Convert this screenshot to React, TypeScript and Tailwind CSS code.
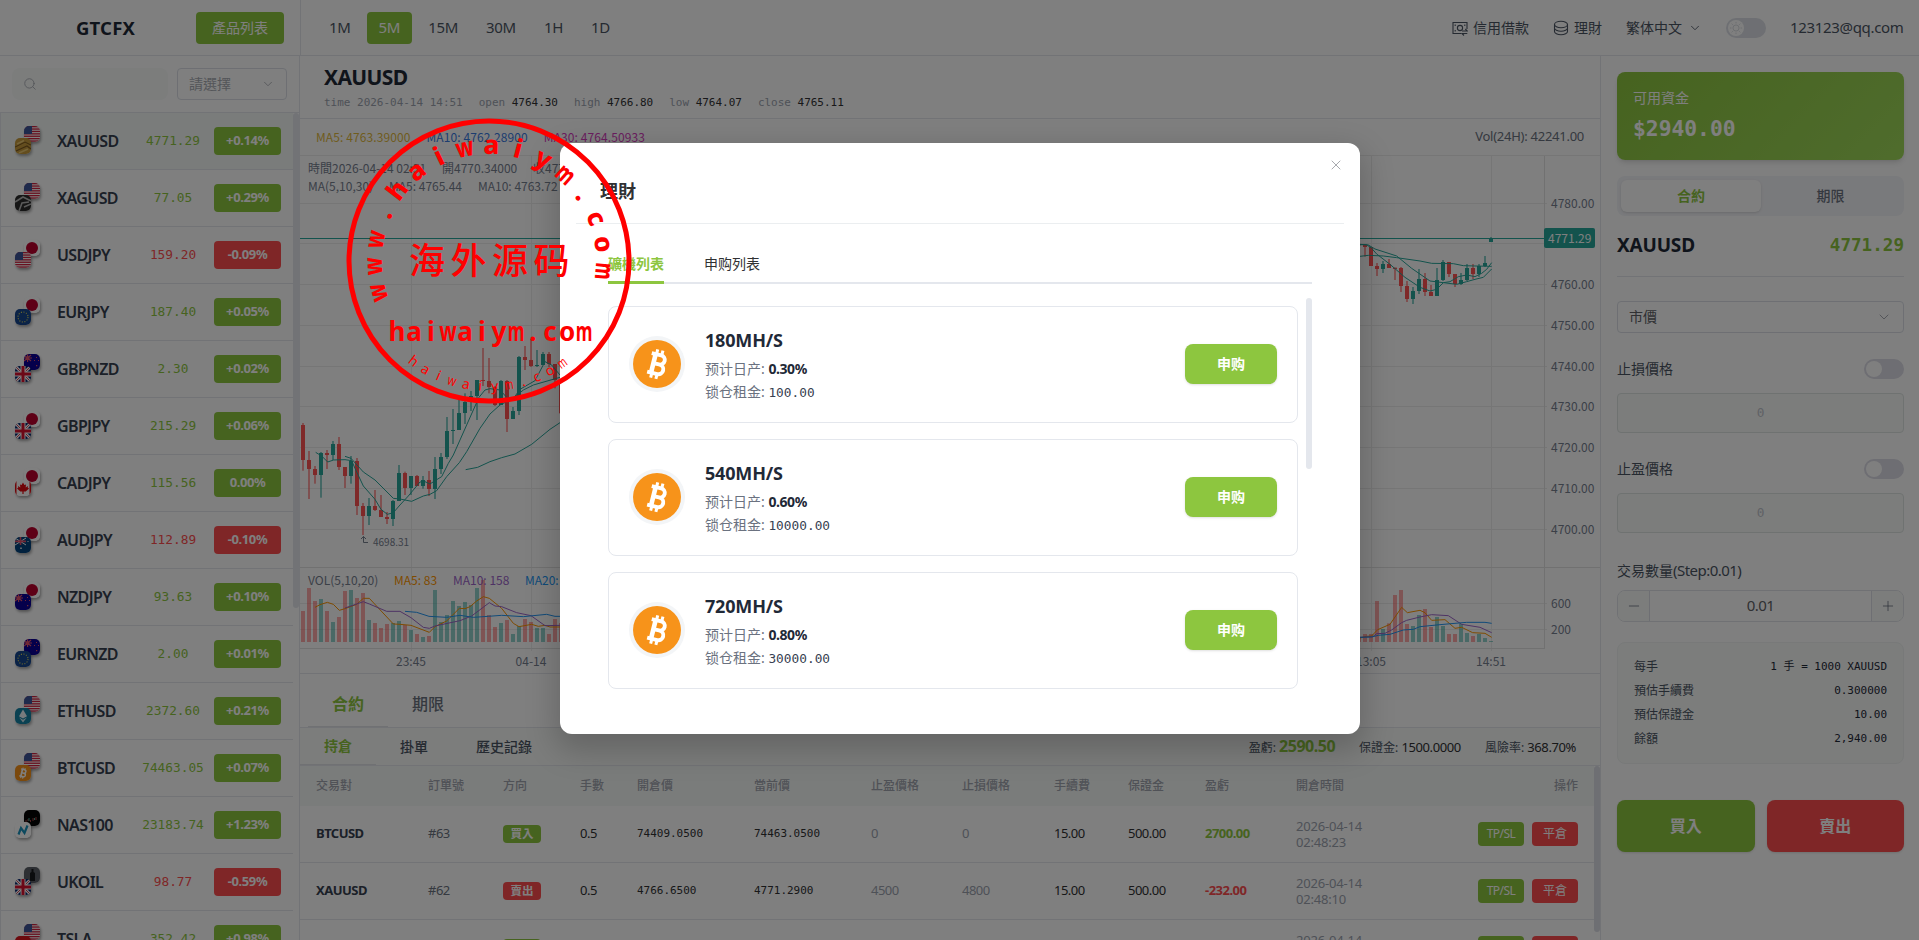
import { cx } from "class-variance-authority"
import { ChevronDown, Minus, Plus, Search, X } from "lucide-react"
import type { ReactNode } from "react"

type Asset =
  | "us"
  | "jp"
  | "eu"
  | "nz"
  | "au"
  | "gb"
  | "ca"
  | "gold"
  | "silver"
  | "eth"
  | "btc"
  | "nas"
  | "dark"
  | "oil"
  | "tsla"

type Product = { symbol: string; price: string; change: string; down?: boolean; back: Asset; front: Asset }

const products: Product[] = [
  { symbol: "XAUUSD", price: "4771.29", change: "+0.14%", back: "us", front: "gold" },
  { symbol: "XAGUSD", price: "77.05", change: "+0.29%", back: "us", front: "silver" },
  { symbol: "USDJPY", price: "159.20", change: "-0.09%", down: true, back: "jp", front: "us" },
  { symbol: "EURJPY", price: "187.40", change: "+0.05%", back: "jp", front: "eu" },
  { symbol: "GBPNZD", price: "2.30", change: "+0.02%", back: "nz", front: "gb" },
  { symbol: "GBPJPY", price: "215.29", change: "+0.06%", back: "jp", front: "gb" },
  { symbol: "CADJPY", price: "115.56", change: "0.00%", back: "jp", front: "ca" },
  { symbol: "AUDJPY", price: "112.89", change: "-0.10%", down: true, back: "jp", front: "au" },
  { symbol: "NZDJPY", price: "93.63", change: "+0.10%", back: "jp", front: "nz" },
  { symbol: "EURNZD", price: "2.00", change: "+0.01%", back: "nz", front: "eu" },
  { symbol: "ETHUSD", price: "2372.60", change: "+0.21%", back: "us", front: "eth" },
  { symbol: "BTCUSD", price: "74463.05", change: "+0.07%", back: "us", front: "btc" },
  { symbol: "NAS100", price: "23183.74", change: "+1.23%", back: "dark", front: "nas" },
  { symbol: "UKOIL", price: "98.77", change: "-0.59%", down: true, back: "oil", front: "gb" },
  { symbol: "TSLA", price: "352.42", change: "+0.98%", back: "us", front: "tsla" },
]

const mono = "font-['DejaVu_Sans_Mono','Noto_Sans_CJK_TC',monospace]"

const BitcoinMark = ({ scale = 1.12 }: { scale?: number }) => (
  <g transform={`translate(16 16) rotate(14) scale(${scale})`} fill="none" stroke="#fff">
    <path d="M-4.6 -5.6H1.2a2.8 2.8 0 0 1 0 5.6H-2.4M1.6 0a2.9 2.9 0 0 1 0 5.8H-4.6" strokeWidth="2.3" />
    <path d="M-2.2 -5.5V5.7" strokeWidth="2.7" />
    <path d="M-1.7 -8.6V-5.5M1.5 -8.6V-5.5M-1.7 5.8V8.8M1.5 5.8V8.8" strokeWidth="1.8" />
  </g>
)

const art: Record<Asset, ReactNode> = {
  us: (
    <>
      <rect width="16" height="16" fill="#fff" />
      {[0, 2.4, 4.8, 7.2, 9.6, 12, 14.4].map(y => (
        <rect key={y} y={y} width="16" height="1.3" fill="#d0213f" />
      ))}
      <rect width="8" height="8" fill="#3c5599" />
    </>
  ),
  jp: (
    <>
      <rect width="16" height="16" fill="#fff" />
      <circle cx="8" cy="8" r="6" fill="#bc002d" />
    </>
  ),
  eu: (
    <>
      <rect width="16" height="16" fill="#17478f" />
      <circle cx="8" cy="8" r="5" fill="none" stroke="#d8d05a" strokeWidth="1.1" strokeDasharray="1.1 1.5" />
    </>
  ),
  nz: (
    <>
      <rect width="16" height="16" fill="#0a0096" />
      <path d="M0 1L7 7M7 1L0 7M3.6 0V8M0 4H8" stroke="#e0506a" strokeWidth="1.2" />
      <path d="M12 3h1v1h-1zM10 6h1v1h-1zM14 6h1v1h-1zM12 11h1.3v1.3H12z" fill="#e05060" />
    </>
  ),
  au: (
    <>
      <rect width="16" height="16" fill="#03437c" />
      <path d="M0 1L11 8M11 1L0 8" stroke="#fff" strokeWidth="1" />
      <path d="M5.5 0V8M0 4.4H11" stroke="#e0506a" strokeWidth="1.6" />
      <path d="M5.3 10.5h1.4v1.4H5.3zM12.5 4h1v1h-1z" fill="#fff" />
    </>
  ),
  gb: (
    <>
      <rect width="16" height="16" fill="#012169" />
      <path d="M0 0L16 16M16 0L0 16" stroke="#fff" strokeWidth="3" />
      <path d="M0 0L16 16M16 0L0 16" stroke="#c8102e" strokeWidth="0.8" />
      <path d="M8 0V16M0 8H16" stroke="#fff" strokeWidth="5" />
      <path d="M8 0V16M0 8H16" stroke="#d8102e" strokeWidth="3" />
    </>
  ),
  ca: (
    <>
      <rect width="16" height="16" fill="#fff" />
      <path d="M0 0H1.5V16H0zM14.5 0H16V16H14.5z" fill="#e00a10" />
      <path
        d="M8 2.5L9.4 5l1.6-.6-.3 3L13 6l-.3 1.6 1.3.9-3.3 3H8.600V14H7.400v-2.500H5.300L2 8.500l1.300-.900L3 6l2.300 1.400L5 4.400 6.600 5z"
        fill="#e00a10"
      />
    </>
  ),
  gold: (
    <>
      <rect width="16" height="16" fill="#c79a3c" />
      <path d="M0 9L10 4l6 3M1 13L12 8l4 3" stroke="#7d5b20" strokeWidth="1.1" fill="none" />
      <path d="M2 6L9 2.5M4 15l9-4" stroke="#e8c670" strokeWidth="1.8" />
    </>
  ),
  silver: (
    <>
      <rect width="16" height="16" fill="#2c2c2c" />
      <path d="M0 7L8 2l8 4M4 16L7 8l7-1M9 12l7-3" stroke="#b5b5b5" strokeWidth="1.6" fill="none" />
    </>
  ),
  eth: (
    <>
      <rect width="16" height="16" fill="#1583a5" />
      <path d="M8 1.5L12 8.3 8 10.6 4 8.3z" fill="#eef6fa" />
      <path d="M4.2 9.6L8 14.5l3.8-4.9L8 11.8z" fill="#cfe6ef" />
    </>
  ),
  btc: (
    <>
      <rect width="16" height="16" fill="#f7931a" />
      <g transform="scale(.5)">
        <BitcoinMark scale={1.25} />
      </g>
    </>
  ),
  nas: (
    <>
      <rect width="16" height="16" fill="#fff" />
      <path d="M3.5 12.5L6 6l3.500 5L12.500 3.500" stroke="#1a93bd" strokeWidth="2.2" fill="none" />
    </>
  ),
  dark: (
    <>
      <rect width="16" height="16" fill="#050505" />
      <path d="M2 10v2M4 9v2M6.5 10v2M9 8v3M12 7v3" stroke="#a04040" strokeWidth="1" />
      <path d="M5 8v3M10.5 8v2" stroke="#40a090" strokeWidth="1" />
    </>
  ),
  oil: (
    <>
      <rect width="16" height="16" fill="#5a5f66" />
      <path d="M6 14V6l1.5-1V2h2v3L11 6v8z" fill="#17191c" />
    </>
  ),
  tsla: (
    <>
      <rect width="16" height="16" fill="#d8141c" />
      <path d="M4 4h8l-1 2H9L8 13 7 6H5z" fill="#fff" />
    </>
  ),
}

const AssetIcon = ({ asset, className }: { asset: Asset; className?: string }) => (
  <svg
    viewBox="0 0 16 16"
    className={cx("size-4 rounded-[5px] shadow-[1px_2px_3px_rgba(0,0,0,0.35)]", className)}
  >
    {art[asset]}
  </svg>
)

const Toggle = ({ sun }: { sun?: boolean }) => (
  <span className={cx("flex h-5 w-10 items-center rounded-full px-0.5", sun ? "bg-[#dcdfe6]" : "bg-[#dcdce6]")}>
    <span className="flex size-4 items-center justify-center rounded-full bg-white">
      {sun && (
        <svg viewBox="0 0 16 16" className="size-3.5" fill="none" stroke="#d4d7de">
          <circle cx="8" cy="8" r="3.5" />
          <path d="M8 1v1.8M8 13.2V15M1 8h1.8M13.2 8H15M3 3l1.3 1.3M11.7 11.7L13 13M13 3l-1.3 1.3M4.3 11.7L3 13" />
        </svg>
      )}
    </span>
  </span>
)

const Header = () => (
  <header className="flex h-14 shrink-0 border-b border-[#e4e7ed] bg-white">
    <div className="flex w-[301px] items-center justify-between border-r border-[#e4e7ed] pr-4 pl-[76px]">
      <strong className="text-[18.5px] font-bold tracking-[0.01em] text-[#1f2937]">GTCFX</strong>
      <button className="h-8 w-[88px] rounded bg-[#8dc63f] text-sm text-white">產品列表</button>
    </div>

    <nav className="flex items-center gap-1 pl-4">
      {["1M", "5M", "15M", "30M", "1H", "1D"].map(item => (
        <button
          key={item}
          className={cx(
            "h-8 rounded px-3 text-[15px] tracking-[-0.02em]",
            item === "5M" ? "bg-[#8dc63f] text-white" : "text-[#4b5563]",
          )}
        >
          {item}
        </button>
      ))}
    </nav>

    <div className="ml-auto flex items-center pr-[15px] text-sm text-[#4b5563]">
      <span className="flex items-center gap-[5px]">
        <svg viewBox="0 0 16 16" className="size-4" fill="none" stroke="currentColor" strokeWidth="1.1">
          <path d="M9 13.5H1V2.5H15V9" />
          <circle cx="8" cy="8" r="2.6" />
          <path d="M3.2 4.5v1.5M12.8 4.5v1.500M3.2 10v1.5M10 11h5.3l-2-2M15.300 13.500H10l2 2" />
        </svg>
        信用借款
      </span>
      <span className="ml-6 flex items-center gap-[5px]">
        <svg viewBox="0 0 16 16" className="size-4" fill="none" stroke="currentColor" strokeWidth="1.1">
          <ellipse cx="8" cy="4.5" rx="6.5" ry="3.2" />
          <path d="M1.500 4.500V8c0 1.700 2.900 3.200 6.500 3.200s6.500-1.500 6.500-3.200V4.500M1.500 8v3.500c0 1.700 2.900 3.200 6.500 3.200s6.500-1.500 6.500-3.200V8" />
        </svg>
        理財
      </span>
      <span className="ml-6 flex items-center gap-1.5">
        繁体中文
        <ChevronDown className="size-3.5" strokeWidth={1.5} />
      </span>
      <span className="ml-6">
        <Toggle sun />
      </span>
      <span className="ml-6 w-[114px] text-[15px] tracking-[-0.022em] whitespace-nowrap">123123@qq.com</span>
    </div>
  </header>
)

const ProductList = () => (
  <aside className="flex w-[300px] shrink-0 flex-col border-r border-[#e4e7ed] bg-white">
    <div className="flex h-[57px] shrink-0 items-center justify-between border-b border-[#e4e7ed] px-3">
      <div className="flex h-8 w-[156px] items-center rounded-lg bg-[#f8faf9] pl-[11px]">
        <Search className="size-3.5 text-[#a8abb2]" strokeWidth={1.5} />
      </div>
      <div className="flex h-8 w-[110px] items-center justify-between rounded border border-[#dcdfe6] px-[11px] text-sm text-[#a8abb2]">
        請選擇
        <ChevronDown className="size-3.5" strokeWidth={1.5} />
      </div>
    </div>

    <div className="flex min-h-0 flex-1 justify-between overflow-hidden">
      <ul className="w-[293px]">
        {products.map(({ symbol, price, change, down, back, front }, index) => (
          <li
            key={symbol}
            className={cx(
              "flex h-[57px] items-center border-b border-l border-[#e4e7ed] pr-3 pl-[14px]",
              index === 0 && "bg-[#f5f9f7]",
            )}
          >
            <span className="relative h-7 w-[42px]">
              <AssetIcon asset={back} className="absolute -top-px left-[9px]" />
              <AssetIcon asset={front} className="absolute top-[11px] left-0" />
            </span>
            <span className="w-[75px] text-base font-semibold tracking-[-0.04em] text-[#374151]">{symbol}</span>
            <span
              className={cx("flex-1 text-center text-[12.8px]", mono, down ? "text-[#ff4d4f]" : "text-[#8dc63f]")}
            >
              {price}
            </span>
            <span
              className={cx(
                "flex h-7 w-[67px] items-center justify-center rounded text-[13px] font-bold tracking-[-0.03em] text-white",
                down ? "bg-[#ff4d4f]" : "bg-[#8dc63f]",
              )}
            >
              {change}
            </span>
          </li>
        ))}
      </ul>
      <span className="h-[495px] w-1.5 rounded-full bg-[#e4e7ed]" />
    </div>
  </aside>
)

// [rising, high, low, body top, body bottom, volume top], in thirds of a pixel
type Candle = [0 | 1, number, number, number, number, number]

const openingCandles: Candle[] = [
  [0, 69, 212, 75, 180, 633],
  [0, 153, 297, 180, 207, 564],
  [0, 198, 251, 207, 225, 603],
  [1, 156, 293, 159, 225, 597],
  [0, 150, 207, 159, 165, 633],
  [1, 123, 180, 132, 165, 666],
  [0, 111, 210, 132, 201, 651],
  [0, 201, 264, 201, 228, 573],
  [1, 168, 251, 183, 228, 570],
  [0, 174, 345, 183, 318, 594],
  [0, 309, 405, 318, 348, 579],
  [1, 294, 375, 318, 348, 660],
  [0, 270, 333, 318, 330, 669],
  [0, 285, 350, 330, 351, 684],
  [0, 336, 372, 351, 357, 672],
  [1, 300, 378, 303, 357, 669],
  [1, 195, 303, 219, 303, 663],
  [0, 215, 285, 219, 264, 675],
  [1, 228, 285, 228, 264, 690],
  [0, 225, 258, 228, 258, 702],
  [1, 228, 266, 240, 258, 711],
  [0, 213, 288, 240, 267, 708],
  [1, 171, 297, 207, 267, 570],
  [1, 159, 222, 171, 207, 666],
  [1, 51, 177, 93, 171, 645],
  [1, 27, 132, 90, 93, 603],
  [1, 0, 90, 39, 90, 618],
  [1, -20, 72, 6, 39, 606],
  [1, -27, 33, -12, -7, 615],
  [1, -60, 60, -60, -12, 564],
  [0, -156, -42, -60, -57, 540],
  [0, -126, -20, -57, -39, 645],
  [0, -42, 18, -39, 15, 681],
  [1, -60, 15, -57, 15, 669],
  [0, -60, 96, -57, 57, 660],
  [1, 21, 57, 33, 57, 702],
  [1, -132, 45, -129, 33, 678],
  [0, -162, -90, -129, -120, 657],
  [0, -183, -99, -120, -102, 666],
  [1, -150, -99, -105, -102, 684],
  [1, -144, -105, -138, -105, 684],
  [0, -144, -99, -138, -108, 702],
  [0, -108, -35, -108, -60, 657],
  [0, -60, 40, -60, 40, 669],
]

const closingCandles: Candle[] = [
  [0, 430, 450, 432, 436, 714],
  [0, 433, 470, 435, 441, 702],
  [0, 440, 498, 441, 498, 702],
  [0, 489, 528, 498, 507, 603],
  [1, 483, 519, 492, 507, 687],
  [0, 477, 504, 492, 504, 670],
  [0, 503, 540, 503, 507, 585],
  [0, 501, 576, 504, 558, 570],
  [0, 543, 606, 558, 597, 672],
  [1, 561, 612, 573, 597, 678],
  [1, 507, 582, 537, 573, 645],
  [0, 519, 588, 537, 576, 627],
  [0, 555, 588, 576, 588, 681],
  [1, 504, 588, 540, 588, 651],
  [1, 480, 543, 486, 540, 678],
  [0, 486, 531, 486, 522, 702],
  [0, 522, 561, 522, 552, 702],
  [1, 519, 555, 540, 552, 672],
  [1, 492, 543, 504, 540, 699],
  [0, 492, 537, 504, 522, 708],
  [1, 492, 531, 498, 522, 702],
  [1, 468, 501, 489, 498, 714],
  [1, 411, 426, 414, 426, 723],
]

const Candles = ({ data, x, y }: { data: Candle[]; x: number; y: number }) => (
  <>
    {data.map(([up, high, low, top, bottom, volume], i) => {
      const left = x + i * 6
      const color = up ? "#26a69a" : "#ff5252"
      return (
        <g key={left} fill={color}>
          <rect x={left + 1} y={y + high / 3} width="2" height={(low - high) / 3} opacity="0.55" />
          <rect x={left} y={y + top / 3} width="4" height={Math.max(1, (bottom - top) / 3)} />
          <rect x={left} y={400 + volume / 3} width="4" height={(726 - volume) / 3} opacity="0.5" />
        </g>
      )
    })}
  </>
)

const priceLabels: [string, number][] = [
  ["4780.00", 203],
  ["4760.00", 284],
  ["4750.00", 325],
  ["4740.00", 366],
  ["4730.00", 406],
  ["4720.00", 447],
  ["4710.00", 488],
  ["4700.00", 529],
  ["600", 603],
  ["200", 629],
]

const gridRows = [203, 243, 284, 325, 366, 406, 447, 488, 529, 603, 629]
const gridColumns = [411, 531, 651, 771, 891, 1011, 1131, 1251, 1371, 1491]

const teal = "#26a69a"
const orange = "#ff9600"
const purple = "#9d65c9"
const blue = "#2196f3"

const leftLines: [string, string][] = [
  [teal, "47,157 65,168 83,186 101,180 135,179 155,182 165,205 190,258 225,298 243,328 262,343 280,338 300,315 325,288 360,246 375,245 390,252 405,242 425,230 445,190 460,165 480,120 500,75 520,30 537,-8 555,-30 570,-34 600,-30 620,-8 640,-4 660,-32 705,-58 735,-115 755,-105 780,-75"],
  [teal, "135,169 153,175 190,216 225,240 280,295 300,297 335,304 370,288 390,283 410,272 440,230 478,188 500,155 540,85 570,42 600,15 640,-5 670,-30 700,-45 780,-68"],
  [teal, "497,209 533,202 570,185 605,173 645,162 695,133 750,88 780,68"],
  [orange, "45,622 60,614 82,607 100,613 118,631 135,626 170,613 190,595 208,595 280,672 300,673 333,676 388,697 405,680 440,663 478,625 495,626 510,620 530,603 550,590 568,595 605,625 640,670 657,680 695,673 715,679 735,676 750,681 780,681"],
  [purple, "135,624 190,605 208,612 260,634 300,634 333,653 370,682 388,685 405,678 480,662 515,648 568,608 585,618 605,620 650,638 693,647 735,677 780,676"],
  [blue, "315,634 350,637 387,649 440,652 480,646 520,652 565,649 605,646 670,650 740,643 765,649 780,649"],
]

const rightLines: [string, string][] = [
  [teal, "60,434 80,434 95,445 110,462 150,493 195,532 240,562 270,573 290,568 310,548 330,545 355,530 380,525 405,530 425,520 440,508 455,488"],
  [teal, "60,433 85,435 105,447 170,468 215,505 270,543 310,548 350,553 380,545 405,538 430,532 455,507"],
  [teal, "60,469 85,466 130,468 170,473 240,483 275,490 340,491 370,497 405,498 455,499"],
  [orange, "60,1614 80,1609 95,1608 113,1589 150,1573 185,1522 202,1538 240,1531 255,1538 275,1561 315,1559 345,1585 365,1582 398,1598 435,1600 455,1612"],
  [purple, "60,1612 98,1610 110,1601 135,1600 155,1590 185,1568 200,1561 240,1551 275,1544 325,1547 345,1560 365,1573 420,1582 455,1598"],
  [blue, "60,1612 95,1611 115,1606 150,1603 190,1590 220,1588 240,1580 300,1574 345,1570 380,1567 435,1567 455,1570"],
]

const Lines = ({ data, transform }: { data: [string, string][]; transform: string }) => (
  <g transform={transform} fill="none" strokeWidth="3" strokeLinejoin="round">
    {data.map(([color, points]) => (
      <polyline key={points} points={points} stroke={color} />
    ))}
  </g>
)

const Chart = () => (
  <svg
    viewBox="300 156 1300 517"
    className="block h-[517px] w-[1300px] font-['Noto_Sans_CJK_TC',sans-serif] text-xs"
    fill="#76808f"
  >
    <g fill="none" stroke="#ededed" shapeRendering="crispEdges">
      {gridRows.map(y => (
        <path key={y} d={`M300 ${y}.5H1547`} />
      ))}
      {gridColumns.map(x => (
        <path key={x} d={`M${x}.5 156V651`} />
      ))}
      <path d="M300 567.5H1600M300 648.5H1544.5V156" stroke="#e2e2e2" />
    </g>

    <Candles data={openingCandles} x={301} y={400} />
    <Candles data={closingCandles} x={1357} y={100} />
    <Lines data={leftLines} transform="translate(300 400) scale(.33333)" />
    <Lines data={rightLines} transform="translate(1340 100) scale(.33333)" />

    <path d="M300 238.5H1544" stroke={teal} />
    <rect x="1544" y="228" width="51" height="20" rx="2" fill={teal} />
    <text x="1548" y="243" fill="#fff">
      4771.29
    </text>

    {priceLabels.map(([label, y]) => (
      <text key={label} x="1551" y={y + 5}>
        {label}
      </text>
    ))}

    <g textAnchor="middle">
      <text x="411" y="666">23:45</text>
      <text x="531" y="666">04-14</text>
      <text x="1371" y="666">13:05</text>
      <text x="1491" y="666">14:51</text>
    </g>

    <path d="M363.5 536.5V542.5H368M361 539l2.5-2.5L366 539" fill="none" stroke="#76808f" />
    <text x="373" y="546" fontSize="10">
      4698.31
    </text>

    <text x="308" y="173">時間2026-04-14 02:51</text>
    <text x="442" y="173">開4770.34000</text>
    <text x="533" y="173">收4771.29000</text>
    <text x="308" y="191">MA(5,10,30)</text>
    <text x="389" y="191">MA5: 4765.44</text>
    <text x="478" y="191">MA10: 4763.72</text>

    <text x="308" y="585">VOL(5,10,20)</text>
    <text x="394" y="585" fill={orange}>MA5: 83</text>
    <text x="453" y="585" fill={purple}>MA10: 158</text>
    <text x="525" y="585" fill={blue}>MA20: 231</text>
  </svg>
)

const quote = [
  ["time", "2026-04-14 14:51"],
  ["open", "4764.30"],
  ["high", "4766.80"],
  ["low", "4764.07"],
  ["close", "4765.11"],
]

const ChartPanel = () => (
  <section className="shrink-0 border-b border-[#e4e7ed]">
    <div className="h-[63px] border-b border-[#e4e7ed] px-6 pt-[5px]">
      <h1 className="text-[21px] leading-8 font-bold tracking-[-0.03em] text-[#1f2937]">XAUUSD</h1>
      <p className={cx("mt-0.5 flex gap-4 text-[10.97px] leading-4 text-[#9ca3af]", mono)}>
        {quote.map(([label, value], index) => (
          <span key={label}>
            {label} <span className={cx(index > 0 && "text-[#303133]")}>{value}</span>
          </span>
        ))}
      </p>
    </div>
    <div className="flex h-[37px] items-center gap-4 border-b border-[#ededed] px-4 font-['Noto_Sans_CJK_TC',sans-serif] text-xs tracking-[0.1px]">
      <span className="text-[#e0b83c]">MA5: 4763.39000</span>
      <span className="text-[#3b7ae0]">MA10: 4762.28900</span>
      <span className="text-[#d63cc0]">MA30: 4764.50933</span>
      <span className="ml-auto font-['Noto_Sans'] text-[13px] tracking-[-0.02em] text-[#6b7280]">Vol(24H): 42241.00</span>
    </div>
    <Chart />
  </section>
)

const columns =
  "grid grid-cols-[112px_75px_77px_57px_117px_117px_91px_92px_74px_77px_91px_1fr_auto] items-center px-4"

const orders = [
  ["BTCUSD", "#63", "買入", "0.5", "74409.0500", "74463.0500", "0", "0", "15.00", "500.00", "2700.00", "02:48:23"],
  ["XAUUSD", "#62", "賣出", "0.5", "4766.6500", "4771.2900", "4500", "4800", "15.00", "500.00", "-232.00", "02:48:10"],
  ["XAUUSD", "#61", "買入", "0.5", "4770.8400", "4771.2900", "0", "0", "15.00", "500.00", "22.50", "02:47:58"],
]

const Positions = () => (
  <section className="flex min-h-0 flex-1 flex-col text-[13px]">
    <div className="flex h-[54px] shrink-0 items-center border-b border-[#e4e7ed] pl-2 text-base">
      <span className="flex h-full w-20 items-center justify-center border-b border-[#e0e2e6] pt-[7px] font-bold text-[#8dc63f]">
        合約
      </span>
      <span className="flex h-full w-20 items-center justify-center pt-[7px] font-medium text-[#6b7280]">期限</span>
    </div>
    <div className="flex h-[38px] shrink-0 items-center border-b border-[#e4e7ed] bg-[#f8faf9] pr-6 text-sm font-medium text-[#4b5563]">
      <span className="flex h-full w-[76px] items-center justify-center border-b border-[#e0e2e6] font-bold text-[#8dc63f]">
        持倉
      </span>
      <span className="px-6">掛單</span>
      <span className="px-6">歷史記錄</span>
      <div className="ml-auto flex items-baseline gap-6 text-xs font-normal">
        <span>
          盈虧: <b className="text-base leading-5 tracking-[-0.03em] text-[#8dc63f]">2590.50</b>
        </span>
        <span>
          保證金: <span className="text-[13px] tracking-[-0.03em] text-[#303133]">1500.0000</span>
        </span>
        <span>
          風險率: <span className="text-[13px] tracking-[-0.03em] text-[#303133]">368.70%</span>
        </span>
      </div>
    </div>
    <div className="flex min-h-0 flex-1 justify-between overflow-hidden">
      <div className="w-[1294px]">
        <div className={cx("h-10 bg-[#f5f8f7] text-xs font-medium text-[#a0a4ae]", columns)}>
          {["交易對", "訂單號", "方向", "手數", "開倉價", "當前價", "止盈價格", "止損價格", "手續費", "保證金", "盈虧", "開倉時間", "操作"].map(
            title => (
              <span key={title}>{title}</span>
            ),
          )}
        </div>
        {orders.map(([symbol, id, side, lots, open, current, profit, loss, fee, margin, pnl, time]) => (
          <div key={id} className={cx("h-[57px] border-b border-[#e4e7ed] tracking-[-0.04em] text-[#303133]", columns)}>
            <b className="text-[#374151]">{symbol}</b>
            <span className="text-[#6b7280]">{id}</span>
            <span
              className={cx(
                "flex h-[18px] w-[38px] items-center justify-center rounded text-[11.5px] font-bold tracking-normal text-white",
                side === "買入" ? "bg-[#8dc63f]" : "bg-[#ff4d4f]",
              )}
            >
              {side}
            </span>
            <span>{lots}</span>
            <span className={cx("text-[10.97px] tracking-normal", mono)}>{open}</span>
            <span className={cx("text-[10.97px] tracking-normal", mono)}>{current}</span>
            <span className="text-[#9ca3af]">{profit}</span>
            <span className="text-[#9ca3af]">{loss}</span>
            <span>{fee}</span>
            <span>{margin}</span>
            <b className={pnl.startsWith("-") ? "text-[#ff4d4f]" : "text-[#8dc63f]"}>{pnl}</b>
            <span className="w-20 leading-4 tracking-[-0.015em] text-[#9ca3af]">
              2026-04-14
              <br />
              {time}
            </span>
            <span className="flex gap-2 text-xs text-white">
              <button className="h-6 w-[46px] rounded bg-[#8dc63f]">TP/SL</button>
              <button className="h-6 w-[46px] rounded bg-[#ff4d4f] tracking-normal">平倉</button>
            </span>
          </div>
        ))}
      </div>
      <span className="h-[166px] w-1.5 rounded-full bg-[#dcdfe6]" />
    </div>
  </section>
)

const fees = [
  ["每手", "1 手 = 1000 XAUUSD"],
  ["預估手續費", "0.300000"],
  ["預估保證金", "10.00"],
  ["餘額", "2,940.00"],
]

const LimitField = ({ label }: { label: string }) => (
  <div className="h-[100px]">
    <div className="flex h-5 items-center justify-between">
      {label}
      <Toggle />
    </div>
    <div
      className={cx(
        "mt-3.5 flex h-10 items-center justify-center rounded border border-[#dfe5e2] bg-[#f8faf9] text-[12.8px] text-[#c0c4cc]",
        mono,
      )}
    >
      0
    </div>
  </div>
)

const TradePanel = () => (
  <aside className="flex w-[319px] shrink-0 flex-col border-l border-[#e4e7ed] bg-white px-4 pt-4 pr-[15px] text-sm text-[#4b5563]">
    <div className="h-[88px] rounded-lg bg-linear-135 from-[#8dc63f] to-[#9fd95a] px-4 pt-4 text-white shadow-md">
      <p>可用資金</p>
      <p className={cx("text-[21.3px] leading-[42px] font-bold", mono)}>$2940.00</p>
    </div>

    <div className="mt-4 flex h-10 rounded-lg bg-[#f3f4f8] p-1 font-bold">
      <span className="flex w-[140px] items-center justify-center rounded-md bg-white text-[#8dc63f] shadow-sm">合約</span>
      <span className="flex flex-1 items-center justify-center font-medium text-[#6b7280]">期限</span>
    </div>

    <div className="flex h-[61px] items-center justify-between border-b border-[#e4e7ed]">
      <strong className="text-[19px] font-bold tracking-[-0.01em] text-[#1f2937]">XAUUSD</strong>
      <span className={cx("text-[17.6px] font-bold text-[#8dc63f]", mono)}>4771.29</span>
    </div>

    <div className="mt-6 flex h-8 shrink-0 items-center justify-between rounded border border-[#dcdfe6] px-[11px] text-[#606266]">
      市價
      <ChevronDown className="size-4 text-[#a8abb2]" strokeWidth={1.5} />
    </div>

    <div className="mt-[26px]">
      <LimitField label="止損價格" />
      <LimitField label="止盈價格" />
    </div>

    <p className="leading-[22px]">
      交易數量<span className="text-[15px] tracking-[-0.035em]">(Step:0.01)</span>
    </p>
    <div className="mt-2 flex h-8 shrink-0 items-center overflow-hidden rounded-lg border border-[#e0e3e8]">
      <span className="flex h-full w-8 items-center justify-center border-r border-[#dcdfe6] bg-[#f8faf9]">
        <Minus className="size-4" strokeWidth={1} />
      </span>
      <span className="flex-1 text-center text-[15px] tracking-[-0.04em] text-[#606266]">0.01</span>
      <span className="flex h-full w-8 items-center justify-center border-l border-[#dcdfe6] bg-[#f8faf9]">
        <Plus className="size-4" strokeWidth={1} />
      </span>
    </div>

    <dl className="mt-5 rounded-lg border border-[#f0f3f2] bg-[#f8faf9] px-4 py-3 text-xs">
      {fees.map(([label, value]) => (
        <div key={label} className="flex h-6 items-center justify-between">
          <dt>{label}</dt>
          <dd className={cx("text-[10.97px] text-[#1f2937]", mono)}>{value}</dd>
        </div>
      ))}
    </dl>

    <div className="mt-9 grid grid-cols-2 gap-3 text-base font-bold text-white">
      <button className="h-[52px] rounded-lg bg-[#8dc63f] shadow-sm">買入</button>
      <button className="h-[52px] rounded-lg bg-[#ff4d4f] shadow-sm">賣出</button>
    </div>
  </aside>
)

const miners = [
  { name: "180MH/S", rate: "0.30%", rent: "100.00" },
  { name: "540MH/S", rate: "0.60%", rent: "10000.00" },
  { name: "720MH/S", rate: "0.80%", rent: "30000.00" },
]

const MinerDialog = () => (
  <div className="absolute inset-0 flex items-start justify-center bg-black/50 pt-[143px] pl-px">
    <div className="h-[591px] w-[800px] rounded-xl bg-white px-4 shadow-[0_12px_32px_4px_rgba(0,0,0,0.2)]">
      <div className="flex h-[81px] justify-between border-b border-[#ebeef0] pl-6">
        <h2 className="pt-[34px] text-lg leading-7 font-bold text-[#303133]">理財</h2>
        <X className="mt-3.5 size-4 text-[#909399]" strokeWidth={1.2} />
      </div>

      <div className="pt-5 pr-8 pl-8">
        <div className="flex h-10 gap-10 border-b-2 border-[#e4e7ed] text-sm text-[#303133]">
          <span className="flex h-10 items-center border-b-3 border-[#8dc63f] pt-0.5 font-bold text-[#8dc63f]">礦機列表</span>
          <span className="flex h-9.5 items-center font-['Noto_Sans_CJK_SC',sans-serif]">申购列表</span>
        </div>

        <div className="mt-3.5 flex justify-between">
          <div className="flex w-[690px] flex-col gap-4 pt-2 font-['Noto_Sans','Noto_Sans_CJK_SC',sans-serif]">
            {miners.map(({ name, rate, rent }) => (
              <div key={name} className="flex h-[117px] items-center rounded-lg border border-[#e4e7ed] px-5">
                <span className="-mt-px size-14 rounded-full bg-[#f3f5f7] p-1">
                  <svg viewBox="0 0 32 32" className="size-12">
                    <circle cx="16" cy="16" r="16" fill="#f7931a" />
                    <BitcoinMark />
                  </svg>
                </span>
                <div className="ml-5 pt-[3px] text-sm text-[#6b7280]">
                  <h3 className="mb-1.5 text-lg leading-6 font-bold tracking-[-0.01em] text-[#1f2937]">{name}</h3>
                  <p className="leading-[22px]">
                    预计日产: <b className="tracking-[-0.03em] text-[#1f2937]">{rate}</b>
                  </p>
                  <p className="leading-[23px]">
                    锁仓租金: <span className={cx("text-[12.8px] text-[#374151]", mono)}>{rent}</span>
                  </p>
                </div>
                <button className="-mt-px ml-auto h-10 w-[92px] rounded-lg bg-[#8dc63f] text-sm font-bold text-white shadow-sm">
                  申购
                </button>
              </div>
            ))}
          </div>
          <span className="h-[171px] w-1.5 rounded-full bg-[#e4e7ed]" />
        </div>
      </div>
    </div>
  </div>
)

// wide letters are narrowed so that every one fills the same cell
const squeeze: Record<string, number> = { m: 0.66, w: 0.78 }

const Stamp = () => (
  <svg
    viewBox="-143 -143 286 286"
    className="absolute top-[117.5px] left-[346px] size-[286px] font-['Noto_Sans','Noto_Sans_CJK_SC',sans-serif]"
    fill="#f00"
    textAnchor="middle"
  >
    <circle r="140" fill="none" stroke="#f00" strokeWidth="5" />
    {[..."www.haiwaiym.com"].map((char, i) => (
      <g key={i} transform={`rotate(${-106 + i * 13.4}) translate(0 -107) scale(${squeeze[char] ?? 1} 1)`}>
        <text fontSize="26" fontWeight="800">
          {char}
        </text>
      </g>
    ))}
    <text x="-80" y="13" fontSize="36" fontWeight="500" letterSpacing="5.5" textAnchor="start">
      海外源码
    </text>
    {[..."haiwaiym.com"].map((char, i) => (
      <g key={i} transform={`translate(${-92 + i * 17} 80) scale(${squeeze[char] ?? 1} 1)`}>
        <text fontSize="26" fontWeight="700">
          {char}
        </text>
      </g>
    ))}
    {[..."haiwaiym.com"].map((char, i) => (
      <g key={i} transform={`rotate(${37 - i * 6.6}) translate(0 130) scale(${squeeze[char] ?? 1} 1)`}>
        <text fontSize="14">{char}</text>
      </g>
    ))}
  </svg>
)

export default function App() {
  return (
    <div className="relative flex h-[940px] w-[1919px] flex-col overflow-hidden bg-white font-['Noto_Sans','Noto_Sans_CJK_TC',sans-serif]">
      <Header />
      <div className="flex min-h-0 flex-1">
        <ProductList />
        <main className="flex w-[1300px] shrink-0 flex-col">
          <ChartPanel />
          <Positions />
        </main>
        <TradePanel />
      </div>
      <MinerDialog />
      <Stamp />
    </div>
  )
}
